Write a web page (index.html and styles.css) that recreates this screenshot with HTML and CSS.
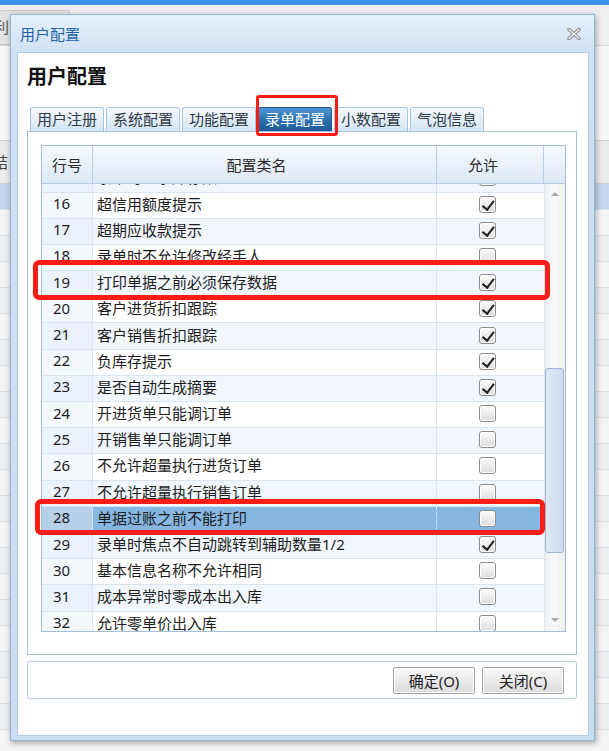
FILE: index.html
```html
<!DOCTYPE html>
<html lang="zh-CN">
<head>
    <meta charset="UTF-8">
    <meta name="viewport" content="width=device-width, initial-scale=1.0">
    <title>用户配置</title>
    <link rel="stylesheet" href="styles.css">
</head>
<body>
    <!-- main window behind the dialog -->
    <div class="app">
        <div class="app-top"></div>
        <div class="app-bar"><div class="app-tab">利</div></div>
        <div class="app-area"></div>
        <div class="app-grid">
            <div class="app-head"><span>结</span></div>
            <div class="app-row sel"></div>
            <div class="app-row"></div><div class="app-row alt"></div><div class="app-row"></div><div class="app-row alt"></div>
            <div class="app-row"></div><div class="app-row alt"></div><div class="app-row"></div><div class="app-row alt"></div>
            <div class="app-row"></div><div class="app-row alt"></div><div class="app-row"></div><div class="app-row alt"></div>
            <div class="app-row"></div><div class="app-row alt"></div><div class="app-row"></div><div class="app-row alt"></div>
            <div class="app-row"></div><div class="app-row alt"></div><div class="app-row"></div><div class="app-row alt"></div>
            <div class="app-row"></div><div class="app-row alt"></div>
        </div>
    </div>

    <div class="dialog">
        <div class="dlg-title">
            <span>用户配置</span>
            <svg class="dlg-close" width="14" height="12" viewBox="0 0 14 12">
                <path d="M2 1.5 L12 10.5 M12 1.5 L2 10.5" stroke="#8d8d8d" stroke-width="3.4" stroke-linecap="round"/>
                <path d="M2 1.5 L12 10.5 M12 1.5 L2 10.5" stroke="#f6f6f6" stroke-width="1.2" stroke-linecap="round"/>
            </svg>
        </div>
        <div class="dlg-body">
            <h1 class="dlg-heading">用户配置</h1>
            <div class="tabs">
                <div class="tab">用户注册</div>
                <div class="tab">系统配置</div>
                <div class="tab">功能配置</div>
                <div class="tab active">录单配置</div>
                <div class="tab">小数配置</div>
                <div class="tab">气泡信息</div>
            </div>
            <div class="tab-panel">
                <div class="grid">
                    <div class="grid-head">
                        <div class="col-no">行号</div>
                        <div class="col-name">配置类名</div>
                        <div class="col-allow">允许</div>
                        <div class="col-sb"></div>
                    </div>
                    <div class="grid-main">
                        <div class="grid-view">
                            <div class="grid-rows">
                                <div class="row odd"><div class="col-no">15</div><div class="col-name">录单时显示库存数量</div><div class="col-allow"><span class="cb"></span></div></div>
                                <div class="row"><div class="col-no">16</div><div class="col-name">超信用额度提示</div><div class="col-allow"><span class="cb on"></span></div></div>
                                <div class="row odd"><div class="col-no">17</div><div class="col-name">超期应收款提示</div><div class="col-allow"><span class="cb on"></span></div></div>
                                <div class="row"><div class="col-no">18</div><div class="col-name">录单时不允许修改经手人</div><div class="col-allow"><span class="cb"></span></div></div>
                                <div class="row odd"><div class="col-no">19</div><div class="col-name">打印单据之前必须保存数据</div><div class="col-allow"><span class="cb on"></span></div></div>
                                <div class="row"><div class="col-no">20</div><div class="col-name">客户进货折扣跟踪</div><div class="col-allow"><span class="cb on"></span></div></div>
                                <div class="row odd"><div class="col-no">21</div><div class="col-name">客户销售折扣跟踪</div><div class="col-allow"><span class="cb on"></span></div></div>
                                <div class="row"><div class="col-no">22</div><div class="col-name">负库存提示</div><div class="col-allow"><span class="cb on"></span></div></div>
                                <div class="row odd"><div class="col-no">23</div><div class="col-name">是否自动生成摘要</div><div class="col-allow"><span class="cb on"></span></div></div>
                                <div class="row"><div class="col-no">24</div><div class="col-name">开进货单只能调订单</div><div class="col-allow"><span class="cb"></span></div></div>
                                <div class="row odd"><div class="col-no">25</div><div class="col-name">开销售单只能调订单</div><div class="col-allow"><span class="cb"></span></div></div>
                                <div class="row"><div class="col-no">26</div><div class="col-name">不允许超量执行进货订单</div><div class="col-allow"><span class="cb"></span></div></div>
                                <div class="row odd"><div class="col-no">27</div><div class="col-name">不允许超量执行销售订单</div><div class="col-allow"><span class="cb"></span></div></div>
                                <div class="row sel"><div class="col-no">28</div><div class="col-name">单据过账之前不能打印</div><div class="col-allow"><span class="cb"></span></div></div>
                                <div class="row odd"><div class="col-no">29</div><div class="col-name">录单时焦点不自动跳转到辅助数量1/2</div><div class="col-allow"><span class="cb on"></span></div></div>
                                <div class="row"><div class="col-no">30</div><div class="col-name">基本信息名称不允许相同</div><div class="col-allow"><span class="cb"></span></div></div>
                                <div class="row odd"><div class="col-no">31</div><div class="col-name">成本异常时零成本出入库</div><div class="col-allow"><span class="cb"></span></div></div>
                                <div class="row"><div class="col-no">32</div><div class="col-name">允许零单价出入库</div><div class="col-allow"><span class="cb"></span></div></div>
                            </div>
                        </div>
                        <div class="vscroll">
                            <div class="sb-btn sb-up"><span class="arrow-up"></span></div>
                            <div class="sb-track"><div class="sb-thumb"></div></div>
                            <div class="sb-btn sb-down"><span class="arrow-down"></span></div>
                        </div>
                    </div>
                </div>
            </div>
            <div class="btn-bar">
                <button class="btn">确定(O)</button>
                <button class="btn">关闭(C)</button>
            </div>
        </div>
    </div>

    <!-- red annotation boxes -->
    <div class="mark mark-tab"></div>
    <div class="mark mark-row19"></div>
    <div class="mark mark-row28"></div>
</body>
</html>
```

FILE: styles.css
```css
* { box-sizing: border-box; }
body { margin: 0; width: 609px; height: 751px; overflow: hidden; position: relative; background: #efefef; font-family: "Noto Sans", "Noto Sans CJK SC", sans-serif; color: #1c1c1c; }

/* background window */
.app { width: 609px; height: 751px; }
.app-top { height: 5px; background: #3a93e8; }
.app-bar { height: 41px; background: #efefef; border-bottom: 1px solid #d6d6d6; padding-top: 5px; }
.app-tab { width: 90px; height: 35px; margin-left: -20px; padding-left: 13px; background: #e3e3e3; border: 1px solid #cacaca; font-size: 15px; line-height: 33px; color: #555; }
.app-area { height: 94px; background: #f6f6f6; }
.app-grid { border-top: 1px solid #d0d0d0; }
.app-head { height: 43px; background: #ebebeb; border-bottom: 1px solid #cfcfcf; font-size: 15px; line-height: 42px; color: #444; }
.app-head span { margin-left: -7px; }
.app-row { height: 26px; background: #f4f4f4; border-bottom: 1px solid #dadfe5; }
.app-row.alt { background: #eceff2; }
.app-row.sel { background: #c3d8ee; }

/* dialog */
.dialog { position: absolute; left: 10px; top: 14px; width: 585px; height: 727px; border: 1px solid #95b5d8; padding: 0 5px 4px 6px; background: linear-gradient(#e6f0fa, #cfe1f4 38px, #c9dcf1); box-shadow: 1px 2px 6px rgba(0, 0, 0, 0.35); display: flex; flex-direction: column; }
.dlg-title { height: 37px; display: flex; align-items: center; justify-content: space-between; padding: 0 8px 0 3px; font-size: 15px; color: #2463a8; }
.dlg-close { display: block; }
.dlg-body { flex: 1; background: #fff; border: 1px solid #b1cbe6; }
.dlg-heading { margin: 11px 0 0 9px; font-size: 20px; line-height: 26px; font-weight: bold; color: #111; }

.tabs { display: flex; gap: 2px; margin-top: 17px; padding-left: 12px; height: 24px; }
.tab { height: 24px; padding: 0 6px; border: 1px solid #a7c4e2; border-bottom: none; border-radius: 3px 3px 0 0; background: linear-gradient(#f4f8fd, #d6e5f5); font-size: 15px; line-height: 23px; color: #2f3a46; }
.tab.active { background: linear-gradient(#4e97d3, #2a6fae 55%, #1c5c98); border-color: #1d5791; color: #fff; }

.tab-panel { margin: 0 11px 0 9px; height: 524px; border: 1px solid #a6c3e2; padding: 13px 10px 0 13px; }
.grid { height: 487px; border: 1px solid #a3bfdc; }
.grid-head { display: flex; height: 38px; background: linear-gradient(#f6f9fd, #dbe8f6); border-bottom: 1px solid #b7cee6; font-size: 15px; color: #2a2a2a; }
.grid-head > div { display: flex; align-items: center; justify-content: center; border-right: 1px solid #b9d0e8; }
.grid-head .col-name { padding-right: 16px; }
.grid-head .col-allow { padding-right: 14px; }
.grid-head .col-sb { border-right: none; }
.col-no { width: 51px; flex: none; }
.col-name { width: 344px; flex: none; }
.col-allow { width: 107px; flex: none; }
.col-sb { width: 21px; flex: none; }

.grid-main { display: flex; height: 447px; }
.grid-view { width: 502px; overflow: hidden; }
.grid-rows { margin-top: -17.7px; }
.row { display: flex; height: 26.2px; font-size: 15px; background: #fff; }
.row.odd { background: #f1f7fd; }
.row > div { display: flex; align-items: center; border-bottom: 1px solid #d8e6f4; padding-bottom: 4px; }
.row .col-no { padding-left: 11px; background: #f3f8fd; border-right: 1px solid #d8e6f4; }
.row.odd .col-no { background: #eaf2fb; }
.row .col-name { padding-left: 4px; border-right: 1px solid #d8e6f4; white-space: nowrap; }
.row .col-allow { justify-content: center; padding-right: 6px; padding-bottom: 2px; }
.row.sel .col-name, .row.sel .col-allow { background: #86b6e2; }
.row.sel .col-name { border-right: 1px dotted #e8f1fa; }
.row.sel .col-no { background: #b7d0ea; }

.cb { width: 17px; height: 17px; border: 1px solid #8c8c8c; border-radius: 3px; background: linear-gradient(#fdfdfd, #dcdcdc); box-shadow: inset 0 0 0 1px #fff; position: relative; }
.cb.on::after { content: ""; position: absolute; left: 5px; top: 1px; width: 4.5px; height: 9.5px; border-right: 2.6px solid #1e1e1e; border-bottom: 2.6px solid #1e1e1e; transform: rotate(38deg); }

.vscroll { width: 21px; display: flex; flex-direction: column; background: linear-gradient(to right, #eceef1, #f8f9fa 50%, #eceef1); border-left: 1px solid #e1e6ec; }
.sb-btn { display: flex; align-items: center; justify-content: center; }
.sb-up { height: 20px; }
.sb-down { height: 22px; }
.arrow-up { width: 0; height: 0; border-left: 4px solid transparent; border-right: 4px solid transparent; border-bottom: 4px solid #a6a6a6; }
.arrow-down { width: 0; height: 0; border-left: 4px solid transparent; border-right: 4px solid transparent; border-top: 4px solid #a6a6a6; }
.sb-track { flex: 1; }
.sb-thumb { margin: 164px 1px 0 0; height: 185px; border: 1px solid #9fb4d6; border-radius: 3px; background: linear-gradient(to right, #dde8f5, #cadcf0); }

.btn-bar { margin: 6px 11px 0 9px; height: 38px; border: 1px solid #b3c8dc; border-radius: 3px; display: flex; align-items: center; justify-content: flex-end; gap: 7px; padding-right: 12px; }
.btn { width: 82px; height: 27px; border: 1px solid #a2a2a2; border-radius: 2px; background: linear-gradient(#f8f8f8, #dcdcdc); box-shadow: inset 0 0 0 1px #fff; font-family: inherit; font-size: 15px; color: #222; padding: 0; }

/* annotations */
.mark { position: absolute; border: 5px solid #f81d15; border-radius: 6px; }
.mark-tab { left: 256px; top: 95px; width: 82px; height: 41px; border-width: 3px; border-radius: 3px; }
.mark-row19 { left: 33px; top: 260px; width: 517px; height: 40px; }
.mark-row28 { left: 35px; top: 499px; width: 510px; height: 36px; }
```
